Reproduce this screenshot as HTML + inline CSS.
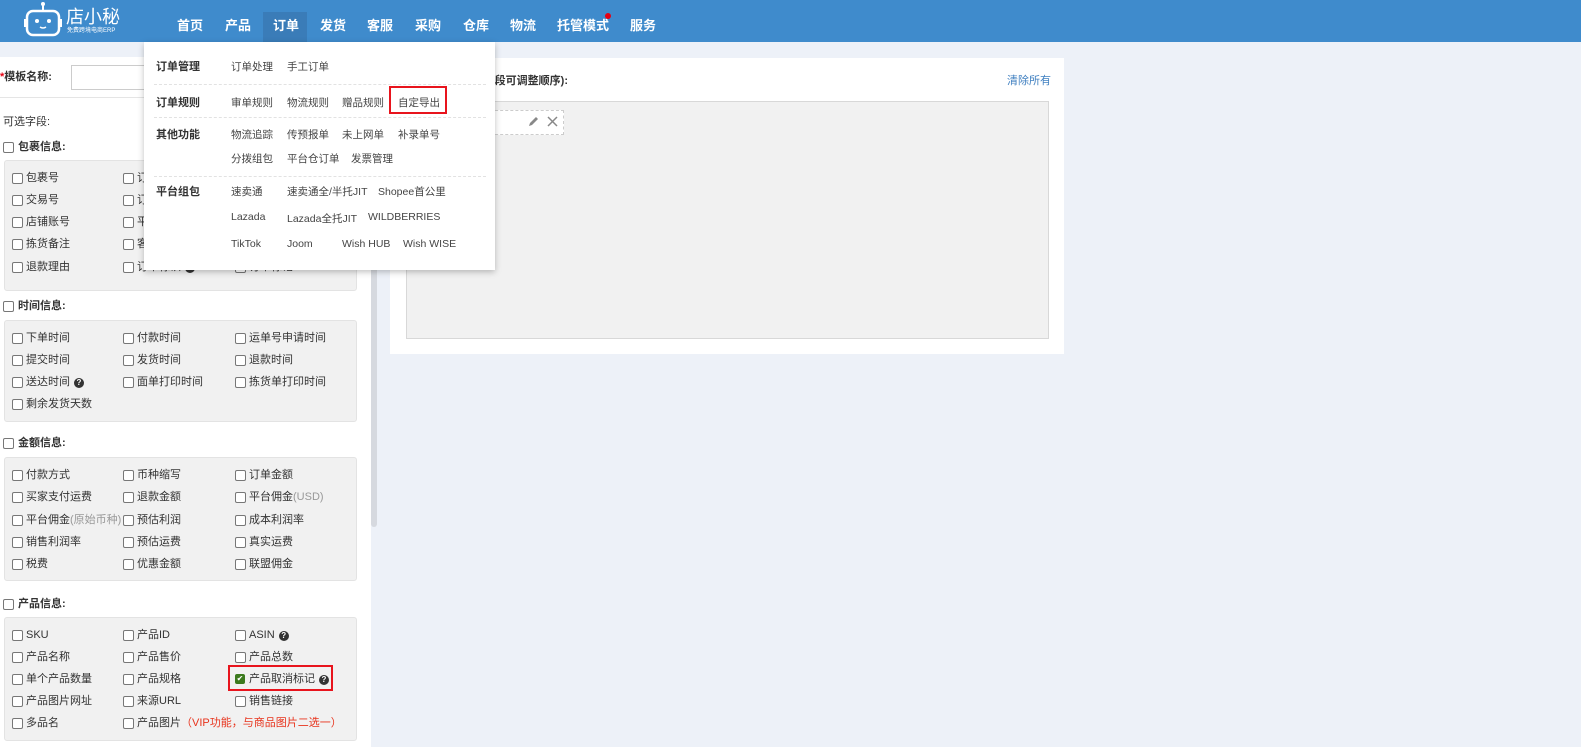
<!DOCTYPE html>
<html><head><meta charset="utf-8">
<style>
*{margin:0;padding:0;box-sizing:border-box}
body{width:1581px;height:747px;overflow:hidden;background:#edf1f8;font-family:"Liberation Sans","Noto Sans CJK SC",sans-serif;font-size:11px;color:#333;position:relative}
.a{position:absolute;white-space:nowrap}
.hdr{position:absolute;left:0;top:0;width:1581px;height:42px;background:#3f8bcc}
.nav{position:absolute;top:0;height:42px;line-height:52px;color:#fff;font-size:13px;font-weight:bold}
.cb{position:absolute;white-space:nowrap;padding-left:14px;line-height:14px;font-size:11px;color:#333}
.cb:before{content:"";position:absolute;left:0;top:2px;width:9px;height:9px;border:1px solid #777;border-radius:2px;background:#fff}
.cb.h{font-weight:bold;font-size:11px;padding-left:15px}
.box{position:absolute;left:4px;width:353px;background:#f1f1f1;border:1px solid #e3e3e3;border-radius:3px}
.q{display:inline-block;width:10px;height:10px;border-radius:50%;background:#333;color:#fff;font-size:8px;line-height:10px;text-align:center;font-weight:bold;margin-left:4px;vertical-align:0}
.dd{position:absolute;left:144px;top:42px;width:351px;height:228px;background:#fff;box-shadow:0 2px 6px rgba(0,0,0,.25)}
.dd .l{position:absolute;font-weight:bold;font-size:11px;color:#333}
.dd .i{position:absolute;font-size:10.5px;color:#444;white-space:nowrap}
.dd .s{position:absolute;left:10px;width:332px;border-top:1px dashed #e2e2e2}
.red{position:absolute;border:2px solid #e8141d}
</style></head><body>
<div class="hdr"></div>
<svg class="a" style="left:24px;top:1px" width="40" height="36" viewBox="0 0 40 36"><circle cx="19" cy="3" r="2" fill="#fff"/><line x1="19" y1="4" x2="19" y2="10" stroke="#fff" stroke-width="2"/><rect x="3" y="10" width="32" height="24" rx="6" fill="none" stroke="#fff" stroke-width="2.5"/><rect x="0" y="18" width="3" height="8" fill="#fff"/><rect x="35" y="18" width="3" height="8" fill="#fff"/><circle cx="13" cy="20" r="2" fill="#fff"/><circle cx="25" cy="20" r="2" fill="#fff"/><path d="M16 26 q3 2 6 0" stroke="#fff" stroke-width="1.5" fill="none"/></svg>
<div class="a" style="left:66px;top:6px;color:#fff;font-size:18px;line-height:22px">店小秘</div>
<div class="a" style="left:67px;top:28px;color:#fff;font-size:6px;line-height:7px">免费跨境电商ERP</div>
<div class="a" style="left:263px;top:12px;width:44px;height:30px;background:#3a7cb8"></div>
<div class="nav" style="left:177px">首页</div>
<div class="nav" style="left:225px">产品</div>
<div class="nav" style="left:273px">订单</div>
<div class="nav" style="left:320px">发货</div>
<div class="nav" style="left:367px">客服</div>
<div class="nav" style="left:415px">采购</div>
<div class="nav" style="left:463px">仓库</div>
<div class="nav" style="left:510px">物流</div>
<div class="nav" style="left:557px">托管模式</div>
<div class="a" style="left:605px;top:13px;width:6px;height:6px;border-radius:50%;background:#e60012"></div>
<div class="nav" style="left:630px">服务</div>

<!-- left panel -->
<div class="a" style="left:0;top:57px;width:371px;height:690px;background:#fff"></div>
<div class="a" style="left:371px;top:57px;width:6px;height:690px;background:#edf1f8"></div>
<div class="a" style="left:371px;top:57px;width:6px;height:470px;background:#d6d9df;border-radius:0 0 3px 3px"></div>
<div class="a" style="left:0;top:68px;font-weight:bold;font-size:11px"><span style="color:#e60012">*</span>模板名称:</div>
<div class="a" style="left:71px;top:65px;width:120px;height:25px;border:1px solid #ccc;background:#fff"></div>
<div class="a" style="left:0;top:97px;width:371px;border-top:1px solid #e5e5e5"></div>
<div class="a" style="left:3px;top:113px">可选字段:</div>

<div class="cb h" style="left:3px;top:140px">包裹信息:</div>
<div class="box" style="top:160px;height:131px"></div>
<div class="cb" style="left:12px;top:171px">包裹号</div><div class="cb" style="left:123px;top:171px">订单号</div>
<div class="cb" style="left:12px;top:193px">交易号</div><div class="cb" style="left:123px;top:193px">订单状态</div>
<div class="cb" style="left:12px;top:215px">店铺账号</div><div class="cb" style="left:123px;top:215px">平台</div>
<div class="cb" style="left:12px;top:237px">拣货备注</div><div class="cb" style="left:123px;top:237px">客服备注</div>
<div class="cb" style="left:12px;top:260px">退款理由</div><div class="cb" style="left:123px;top:260px">订单标识<span class="q">?</span></div><div class="cb" style="left:235px;top:260px">订单标记</div>

<div class="cb h" style="left:3px;top:299px">时间信息:</div>
<div class="box" style="top:320px;height:102px"></div>
<div class="cb" style="left:12px;top:331px">下单时间</div><div class="cb" style="left:123px;top:331px">付款时间</div><div class="cb" style="left:235px;top:331px">运单号申请时间</div>
<div class="cb" style="left:12px;top:353px">提交时间</div><div class="cb" style="left:123px;top:353px">发货时间</div><div class="cb" style="left:235px;top:353px">退款时间</div>
<div class="cb" style="left:12px;top:375px">送达时间<span class="q">?</span></div><div class="cb" style="left:123px;top:375px">面单打印时间</div><div class="cb" style="left:235px;top:375px">拣货单打印时间</div>
<div class="cb" style="left:12px;top:397px">剩余发货天数</div>

<div class="cb h" style="left:3px;top:436px">金额信息:</div>
<div class="box" style="top:457px;height:124px"></div>
<div class="cb" style="left:12px;top:468px">付款方式</div><div class="cb" style="left:123px;top:468px">币种缩写</div><div class="cb" style="left:235px;top:468px">订单金额</div>
<div class="cb" style="left:12px;top:490px">买家支付运费</div><div class="cb" style="left:123px;top:490px">退款金额</div><div class="cb" style="left:235px;top:490px">平台佣金<span style="color:#999">(USD)</span></div>
<div class="cb" style="left:12px;top:513px">平台佣金<span style="color:#999">(原始币种)</span></div><div class="cb" style="left:123px;top:513px">预估利润</div><div class="cb" style="left:235px;top:513px">成本利润率</div>
<div class="cb" style="left:12px;top:535px">销售利润率</div><div class="cb" style="left:123px;top:535px">预估运费</div><div class="cb" style="left:235px;top:535px">真实运费</div>
<div class="cb" style="left:12px;top:557px">税费</div><div class="cb" style="left:123px;top:557px">优惠金额</div><div class="cb" style="left:235px;top:557px">联盟佣金</div>

<div class="cb h" style="left:3px;top:597px">产品信息:</div>
<div class="box" style="top:617px;height:124px"></div>
<div class="cb" style="left:12px;top:628px">SKU</div><div class="cb" style="left:123px;top:628px">产品ID</div><div class="cb" style="left:235px;top:628px">ASIN<span class="q">?</span></div>
<div class="cb" style="left:12px;top:650px">产品名称</div><div class="cb" style="left:123px;top:650px">产品售价</div><div class="cb" style="left:235px;top:650px">产品总数</div>
<div class="cb" style="left:12px;top:672px">单个产品数量</div><div class="cb" style="left:123px;top:672px">产品规格</div>
<div class="a" style="left:235px;top:674px;width:10px;height:10px;background:#3c7a1e;border-radius:2px;color:#fff;font-size:8px;line-height:10px;text-align:center">✔</div>
<div class="a" style="left:249px;top:672px;line-height:14px">产品取消标记<span class="q">?</span></div>
<div class="red" style="left:228px;top:665px;width:105px;height:26px"></div>
<div class="cb" style="left:12px;top:694px">产品图片网址</div><div class="cb" style="left:123px;top:694px">来源URL</div><div class="cb" style="left:235px;top:694px">销售链接</div>
<div class="cb" style="left:12px;top:716px">多品名</div><div class="cb" style="left:123px;top:716px">产品图片<span style="color:#e8341d">（VIP功能，与商品图片二选一）</span></div>

<!-- right card -->
<div class="a" style="left:390px;top:58px;width:674px;height:296px;background:#fff"></div>
<div class="a" style="left:414px;top:72px;font-weight:bold;font-size:11px">已选字段(拖动字段可调整顺序):</div>
<div class="a" style="left:1007px;top:72px;color:#3f7fc0;font-size:11px">清除所有</div>
<div class="a" style="left:406px;top:101px;width:643px;height:238px;background:#f1f1f1;border:1px solid #d8d8d8"></div>
<div class="a" style="left:414px;top:110px;width:150px;height:25px;background:#fff;border:1px dashed #ccc"></div>
<svg class="a" style="left:527px;top:115px" width="32" height="12" viewBox="0 0 32 12"><path d="M2 11 L3 8 L9 2 L11 4 L5 10 Z" fill="#888"/><path d="M21 2 L30 11 M30 2 L21 11" stroke="#888" stroke-width="1.5"/></svg>

<!-- dropdown -->
<div class="dd">
<div class="l" style="left:12px;top:16px">订单管理</div>
<div class="i" style="left:87px;top:17px">订单处理</div><div class="i" style="left:143px;top:17px">手工订单</div>
<div class="s" style="top:42px"></div>
<div class="l" style="left:12px;top:52px">订单规则</div>
<div class="i" style="left:87px;top:53px">审单规则</div><div class="i" style="left:143px;top:53px">物流规则</div><div class="i" style="left:198px;top:53px">赠品规则</div><div class="i" style="left:254px;top:53px">自定导出</div>
<div class="s" style="top:75px"></div>
<div class="l" style="left:12px;top:84px">其他功能</div>
<div class="i" style="left:87px;top:85px">物流追踪</div><div class="i" style="left:143px;top:85px">传预报单</div><div class="i" style="left:198px;top:85px">未上网单</div><div class="i" style="left:254px;top:85px">补录单号</div>
<div class="i" style="left:87px;top:109px">分拨组包</div><div class="i" style="left:143px;top:109px">平台仓订单</div><div class="i" style="left:207px;top:109px">发票管理</div>
<div class="s" style="top:134px"></div>
<div class="l" style="left:12px;top:141px">平台组包</div>
<div class="i" style="left:87px;top:142px">速卖通</div><div class="i" style="left:143px;top:142px">速卖通全/半托JIT</div><div class="i" style="left:234px;top:142px">Shopee首公里</div>
<div class="i" style="left:87px;top:169px">Lazada</div><div class="i" style="left:143px;top:169px">Lazada全托JIT</div><div class="i" style="left:224px;top:169px">WILDBERRIES</div>
<div class="i" style="left:87px;top:196px">TikTok</div><div class="i" style="left:143px;top:196px">Joom</div><div class="i" style="left:198px;top:196px">Wish HUB</div><div class="i" style="left:259px;top:196px">Wish WISE</div>
</div>
<div class="red" style="left:389px;top:86px;width:58px;height:28px"></div>
</body></html>
